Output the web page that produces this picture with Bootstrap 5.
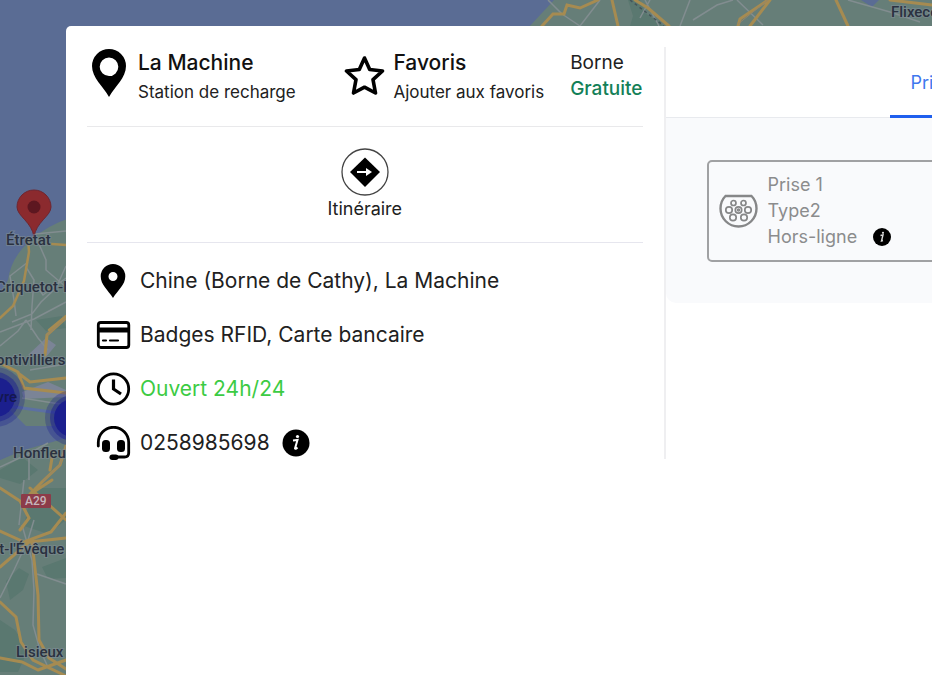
<!DOCTYPE html>
<html lang="fr">
<head>
<meta charset="utf-8">
<meta name="viewport" content="width=device-width, initial-scale=1">
<title>La Machine – Station de recharge</title>
<link rel="stylesheet" href="https://cdn.jsdelivr.net/npm/bootstrap@5.3.0/dist/css/bootstrap.min.css">
<style>
body { font-family: Inter, "Liberation Sans", sans-serif; color: #212121; background: #5a6c94; }
.map-layer { position: absolute; inset: 0; overflow: hidden; z-index: 0; }
.map-layer svg { display: block; }
.map-layer text { font-family: Roboto, "Liberation Sans", sans-serif; font-size: 15px; font-weight: 500; fill: #2a3140; stroke: #7e8c95; stroke-width: 2px; stroke-opacity: .6; paint-order: stroke; }
.map-layer .road-label { font-size: 12px; fill: #c5b5bb; stroke: none; }
.map-layer .on-cluster { fill: #14174f; stroke: none; }
.shell { padding: 26px 0 0 66px; }
.sheet { z-index: 1; border-top-left-radius: 5px; padding-top: 21px; }
.split { display: grid; grid-template-columns: 9fr 4fr; min-height: 411px; }
.info { padding: 0 21px; border-right: 2px solid #efeff1; }
.summary { height: 80px; border-bottom: 1px solid #e9e9eb; }
.heading { font-size: 21px; line-height: 32px; font-weight: 500; color: #111; }
.caption { font-size: 17px; line-height: 26px; }
.price { font-size: 19px; line-height: 26px; padding-top: 3px; }
.free { color: #148058; font-weight: 500; }
.plain { background: none; border: 0; padding: 0; color: inherit; text-align: left; }
.pin-big { margin: 2px 12px 0 5px; }
.favourite { margin: 0 26px 0 auto; }
.star { margin: 8px 8px 0 0; }
.route { height: 116px; border-bottom: 1px solid #e6e6ee; padding-top: 21px; }
.route button { font-size: 18px; line-height: 26px; }
.facts { padding: 22px 0 0 9px; display: grid; gap: 22px; }
.facts li { height: 32px; font-size: 21px; gap: 9px; }
.facts svg { flex: none; }
.facts a { color: inherit; text-decoration: none; }
.open { color: #3ccb43; }
.tab-row { height: 71px; border-bottom: 1px solid #e8eaee; padding-left: 224px; }
.tab-row button { height: 71px; padding: 2px 21px 0; font-size: 18px; color: #3f78ee; border-bottom: 3px solid #1f5fee; flex: none; }
.outlets { background: #f9fafc; padding: 42px 0 41px 41px; border-bottom-left-radius: 10px; }
.outlet { width: 420px; border: 2px solid #a0a1a3; border-radius: 5px; padding: 10px; gap: 10px; font-size: 18px; line-height: 26px; color: #8b8c8d; }
</style>
<script src="https://cdn.jsdelivr.net/npm/bootstrap@5.3.0/dist/js/bootstrap.bundle.min.js"></script>
</head>
<body class="min-vh-100 overflow-hidden">
<div class="map-layer">
<svg width="932" height="675" viewBox="0 0 932 675" role="img" aria-label="Carte">
  <rect width="932" height="675" fill="#5a6c94"/>
  <path d="M528 28L554 0H932V28Z M70 218Q48 225 31 240Q11 257 8 280L0 293V400L26 426H66L90 420V218Z" fill="#667e78"/>
  <path d="M0 460L24 450L70 437V675H0Z" fill="#667e78"/>
  <path d="M628 0H640L645 13L664 26H630L633 16Z M0 470L22 457L38 470L20 484L0 478Z M32 488H66V520L48 534L24 526Z M6 581L19 568L29 574L23 590L10 600Z M42 567L66 558V578L48 579Z M0 620L15 630L28 650L18 672H0Z M36 320L62 316L66 328L46 331Z" fill="#5a7870"/>
  <path d="M861 0L872 7L879 0Z" fill="#5a6c94"/>
  <path d="M0 404L20 426H66V436L20 449L0 460Z" fill="#5a6c94"/>
  <path d="M0 405L66 414" stroke="#5c70a2" stroke-width="3" fill="none"/>
  <path d="M28 355L46 338L56 345L46 357Z M22 392L48 382L66 390V397L24 399Z" fill="#7b8496"/>
  <g fill="none" stroke="#828d90" stroke-width="1.5">
    <path d="M35 235L46 260V270L66 287M66 231L35 234M28 262L10 276L14 300L16 316M26 267L34 280L32 306L31 330M66 266L56 288L41 302L32 314L12 322M0 346L18 331L26 320M36 285L43 295L66 278M0 467L28 454L48 443M26 320L38 338L48 350M30 370L66 364M22 398L66 405M29 455V480M22 525L32 560L34 590L33 625L40 650L48 667M0 598L14 570L28 540L34 520M37 574L66 584M24 480L19 525M0 332L34 319L66 302"/>
    <path d="M562 14L580 26L600 0M640 18L650 0M548 0L562 14M680 26L690 0M693 20L717 5L733 0M737 0L763 25M848 0L890 12L920 22M645 0L659 26"/>
  </g>
  <g fill="none" stroke="#a68b51" stroke-linecap="round">
    <path d="M28 238L29 252L24 281L13 306L0 318M52 244L66 245M66 316L49 330" stroke-width="2.5"/>
    <path d="M66 318L47 335L45 355M0 363L18 372L24 388L66 393M18 373L30 382L66 378M53 452L50 470" stroke-width="3"/>
    <path d="M66 446L60 465L43 481L30 494M0 488L20 501L29 518L20 530M30 488L66 520M66 513L51 532L24 542L0 531M66 538L29 542L0 567M32 542L38 595L39 640L49 658L66 669M0 602L16 617L21 642L33 660L66 676M0 658L22 662L38 670M38 670L66 660M26 497L52 480" stroke-width="3"/>
    <path d="M542 26L553 14H564L567 5L580 8L598 0M612 0L618 26M635 0L648 8L669 26M738 26L740 19L768 0M750 26L770 0M836 0L848 26M890 0L932 5" stroke-width="3"/>
    <path d="M66 318L47 335M66 446L60 465L43 481M738 24L768 0" stroke="#93856c" stroke-width="1"/>
  </g>
  <path d="M630 0L664 26" stroke="#45555a" stroke-width="1.5" stroke-dasharray="3 3"/>
  <g fill="#1b1f8e"><circle cx="-5" cy="397" r="30" opacity=".3"/><circle cx="-5" cy="397" r="25" opacity=".5"/><circle cx="-5" cy="397" r="20"/><circle cx="73" cy="418" r="28" opacity=".3"/><circle cx="73" cy="418" r="23" opacity=".5"/><circle cx="73" cy="418" r="19"/></g>
  <path d="M34 237C32 222 17 216 17 207A17 17 0 0 1 51 207C51 216 36 222 34 237Z" fill="#8b2a2e" stroke="#6e2630"/>
  <circle cx="34" cy="207" r="6.500" fill="#5d1720"/>
  <text x="6" y="245">Étretat</text><text x="-4" y="292">Criquetot-l'Esneval</text><text x="-17" y="365">Montivilliers</text><text x="-42" y="402" class="on-cluster">Le Havre</text><text x="13" y="458">Honfleur</text><text x="-27" y="554">Pont-l'Évêque</text><text x="16" y="657">Lisieux</text><text x="891" y="17">Flixecourt</text>
  <rect x="21" y="494" width="30" height="14" rx="1" fill="#8c3b49"/><text x="25" y="505" class="road-label">A29</text>
</svg>
</div>

<div class="shell min-vh-100 d-flex">
<main class="sheet bg-white position-relative flex-grow-1 overflow-hidden">
 <div class="split">
  <section class="info">
    <div class="summary d-flex align-items-start">
      <div class="d-flex">
        <svg class="pin-big" width="34" height="48" viewBox="0 0 34 48" aria-hidden="true"><path fill="#000" fill-rule="evenodd" d="M17 0A17 17 0 0 0 0 17C0 29 11 37 17 48C23 37 34 29 34 17A17 17 0 0 0 17 0ZM17 8.500A9.300 9.300 0 1 1 17 27.100A9.300 9.300 0 0 1 17 8.500Z"/></svg>
        <div><div class="heading">La Machine</div><div class="caption">Station de recharge</div></div>
      </div>
      <button type="button" class="plain favourite d-flex align-items-start">
        <svg class="star" width="41" height="41" viewBox="0 0 41 41" aria-hidden="true"><path fill="none" stroke="#000" stroke-width="3.600" stroke-linejoin="round" d="M20.500 3L25.700 14.500L38.500 16L29 24.600L31.500 38L20.500 32.200L9.500 38L12 24.600L2.500 16L15.300 14.500Z"/></svg>
        <span><span class="heading d-block">Favoris</span><span class="caption d-block">Ajouter aux favoris</span></span>
      </button>
      <div class="price"><div>Borne</div><div class="free">Gratuite</div></div>
    </div>
    <div class="route d-flex justify-content-center align-items-start">
      <button type="button" class="plain d-flex flex-column align-items-center">
        <svg width="48" height="48" viewBox="0 0 48 48" aria-hidden="true"><circle cx="24" cy="24" r="23" fill="#fff" stroke="#444" stroke-width="1.300"/><path d="M24 9.500L39 24L24 39L9 24Z"/><path d="M16 24H26" stroke="#fff" stroke-width="2"/><path d="M25 20L31 24L25 28Z" fill="#fff"/></svg>
        Itinéraire
      </button>
    </div>
    <ul class="facts list-unstyled mb-0">
      <li class="d-flex align-items-center"><svg width="35" height="34" viewBox="0 0 35 34" aria-hidden="true"><path fill-rule="evenodd" d="M17 0A12.300 12.300 0 0 0 4.700 12.300C4.700 21 12 26 17 34C22 26 29.300 21 29.300 12.300A12.300 12.300 0 0 0 17 0ZM17 8A4.500 4.500 0 1 1 17 17A4.500 4.500 0 0 1 17 8Z"/></svg>Chine (Borne de Cathy), La Machine</li>
      <li class="d-flex align-items-center"><svg width="35" height="34" viewBox="0 0 35 34" aria-hidden="true"><rect x="2.300" y="4.500" width="30.500" height="25" rx="2.500" fill="none" stroke="#000" stroke-width="2.800"/><path d="M2 9.500H33V14.500H2Z"/><path d="M7 22.500H10M14 22.500H22" stroke="#000" stroke-width="2.200" stroke-linecap="round"/></svg>Badges RFID, Carte bancaire</li>
      <li class="d-flex align-items-center open"><svg width="35" height="34" viewBox="0 0 35 34" fill="none" stroke="#000" stroke-width="2.800" aria-hidden="true"><circle cx="17.500" cy="17" r="15.200"/><path d="M17.500 7.500V17L25 22" stroke-width="3.200"/></svg>Ouvert 24h/24</li>
      <li class="d-flex align-items-center"><svg width="35" height="34" viewBox="0 0 35 34" fill="none" stroke="#000" stroke-width="2.800" aria-hidden="true"><path d="M2.300 20V16.500A15.200 15.200 0 0 1 32.700 16.500V27Q32.700 31 28.500 31H18" stroke-linecap="round"/><rect x="6" y="14" width="8" height="12" rx="3.500" fill="#000" stroke="none"/><rect x="21" y="14" width="8" height="12" rx="3.500" fill="#000" stroke="none"/><rect x="13.500" y="28.500" width="9" height="5.500" rx="2.700" fill="#000" stroke="none"/></svg><a href="tel:0258985698">0258985698</a>
        <button type="button" class="plain d-flex" aria-label="Informations"><svg width="34" height="28" viewBox="0 0 34 28" aria-hidden="true"><circle cx="17" cy="14" r="13.500"/><path d="M14 11.500L18.500 11L16 19.500Q16.300 20.500 18.500 18.500" stroke="#fff" stroke-width="2" fill="none"/><circle cx="18.500" cy="7.500" r="1.600" fill="#fff"/></svg></button></li>
    </ul>
  </section>
  <section class="overflow-hidden">
    <div class="tab-row d-flex" role="tablist"><button type="button" class="bg-transparent border-top-0 border-start-0 border-end-0" role="tab" aria-selected="true">Prises</button></div>
    <div class="outlets">
      <div class="outlet d-flex align-items-center">
        <svg width="39" height="34" viewBox="0 0 39 34" fill="none" stroke="#868788" stroke-width="2.400" aria-hidden="true"><path d="M6.500 2H32.500Q37.500 7 37.500 14.500A18 18 0 0 1 1.500 14.500Q1.500 7 6.500 2Z"/><g stroke-width="1.700"><circle cx="14.500" cy="9" r="2.500"/><circle cx="24.500" cy="9" r="2.500"/><circle cx="10" cy="16" r="3.200"/><circle cx="19.500" cy="16" r="3.200"/><circle cx="29" cy="16" r="3.200"/><circle cx="14" cy="23.500" r="3.200"/><circle cx="25" cy="23.500" r="3.200"/></g><circle cx="19.500" cy="16" r="1" stroke-width="1.500"/></svg>
        <div><div>Prise 1</div><div>Type2</div>
        <div class="d-flex align-items-center">Hors-ligne<button type="button" class="plain d-flex ms-3" aria-label="Informations"><svg width="18" height="18" viewBox="0 0 18 18" aria-hidden="true"><circle cx="9" cy="9" r="9"/><path d="M7.500 7.500L10 7L8.500 13L10 12.500" stroke="#ddd" stroke-width="1.400" fill="none"/><circle cx="10" cy="4.800" r="1.100" fill="#ddd"/></svg></button></div></div>
      </div>
    </div>
  </section>
 </div>
</main>
</div>
</body>
</html>
